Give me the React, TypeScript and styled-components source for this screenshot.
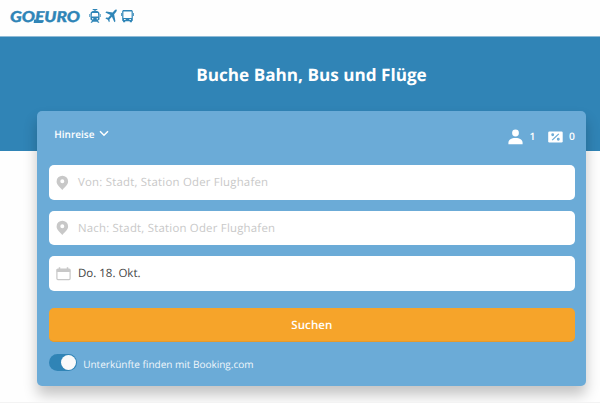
import React, { useState } from 'react';
import styled, { createGlobalStyle } from 'styled-components';

const GlobalStyle = createGlobalStyle`
  * { box-sizing: border-box; }
  body { margin: 0; background: #fefefe; overflow: hidden; font-family: 'Open Sans', sans-serif; text-rendering: geometricPrecision; }
  button { font-family: inherit; border: 0; padding: 0; background: none; text-rendering: inherit; }
`;

const Page = styled.div`
  width: 600px;
  height: 403px;
  overflow: hidden;
  border-bottom: 1px solid #f3f3f3;
`;

const Header = styled.header`
  display: flex;
  align-items: flex-start;
  height: 37px;
  padding: 8px 0 0 9px;
  border-bottom: 1px solid #8fbbd7;
`;

const Vehicles = styled.div`
  display: flex;
  gap: 4px;
  margin-left: 7px;
  color: #2f85b7;
`;

const Hero = styled.section`
  height: 114px;
  padding-top: 27px;
  background: #3084b6;
`;

const Title = styled.h1`
  margin: 0 0 0 23px;
  color: #fff;
  font-size: 17.15px;
  line-height: 24px;
  font-weight: 700;
  text-align: center;
`;

const Card = styled.form`
  width: 549px;
  height: 275px;
  margin: -40px 0 0 37.3px;
  padding: 14px 11.3px 0 11.4px;
  border-radius: 5px;
  background: #6babd7;
  box-shadow: 0 9px 14px rgba(0, 0, 0, 0.23);
  position: relative;
`;

const Options = styled.div`
  display: flex;
  justify-content: space-between;
  height: 40px;
  color: #fff;
`;

const TripType = styled.button`
  display: flex;
  align-items: center;
  gap: 5px;
  height: 17px;
  margin-left: 5.6px;
  color: #fff;
  font-size: 10px;
  font-weight: 600;
`;

const Counters = styled.div`
  display: flex;
  align-items: center;
  height: 23px;
  font-size: 10.3px;
  font-weight: 600;
`;

const Count = styled.span<{ $gap: number }>`
  width: 6px;
  margin: 0 ${(p) => p.$gap}px 0 6.5px;
`;

const Field = styled.label<{ $filled?: boolean }>`
  display: flex;
  align-items: center;
  height: 34.5px;
  margin-bottom: 11px;
  padding-top: ${(p) => (p.$filled ? 1 : 0.8)}px;
  padding-left: 7.8px;
  border-radius: 5px;
  background: #fff;
  color: ${(p) => (p.$filled ? '#444' : '#c9c9c9')};
  font-size: ${(p) => (p.$filled ? 11.5 : 11.4)}px;
  letter-spacing: ${(p) => (p.$filled ? '0' : '0.22px')};
  svg { flex: none; margin-right: ${(p) => (p.$filled ? 6.5 : 8.5)}px; color: #c8c8c8; }
`;

const SearchButton = styled.button`
  display: block;
  width: 100%;
  height: 34px;
  margin-top: 17px;
  padding-top: 2px;
  border-radius: 5px;
  border-bottom: 1px solid #e69a2b;
  background: #f6a42a;
  color: #fff;
  font-size: 11.5px;
  font-weight: 600;
  letter-spacing: 0.1px;
`;

const Lodging = styled.div`
  display: flex;
  align-items: center;
  height: 18px;
  margin-top: 12px;
  color: #f1f7fb;
  font-size: 10px;
`;

const LodgingText = styled.span`
  padding-top: 2px;
`;

const Switch = styled.button<{ $on: boolean }>`
  display: flex;
  justify-content: ${(p) => (p.$on ? 'flex-end' : 'flex-start')};
  width: 28px;
  height: 17px;
  margin-right: 6.5px;
  padding: 1px;
  border-radius: 9px;
  background: #3084b6;
`;

const Knob = styled.span`
  width: 15px;
  height: 15px;
  border-radius: 50%;
  background: #fafafa;
`;

const Logo = () => (
  <svg width="73" height="17" viewBox="0 0 73 17">
    <text x="1" y="13.500" textLength="70" lengthAdjust="spacingAndGlyphs" fill="#2f85b7" stroke="#2f85b7"
      strokeWidth=".35" fontFamily="Lato" fontWeight="900" fontStyle="italic" fontSize="15">GOEURO</text>
    <path d="M25.200 11.500h2l-.3 2h7l-.3 1.400h-9z" fill="#2f85b7" />
  </svg>
);

const Train = () => (
  <svg width="12" height="16" viewBox="0 0 13 16" preserveAspectRatio="none" fill="currentColor">
    <path fillRule="evenodd" d="M4 1h5v1H7.200v.8c2.700.1 4.200 1.200 4.200 3.200v4.800c0 1-.7 1.700-1.800 1.700l1.700 2.300H9.700l-.8-1H4.100l-.8 1H1.700l1.700-2.300c-1.100 0-1.800-.7-1.800-1.700V6c0-2 1.500-3.100 4.200-3.200V2H4zM3.300 5 2.900 8.600h7.200L9.700 5zM4 9.900a.8.8 0 1 0 0 1.600.8.8 0 0 0 0-1.600m5 0a.8.8 0 1 0 0 1.600.8.8 0 0 0 0-1.600" />
    <path d="M.4 6h.8v3H.4zm11.400 0h.8v3h-.8z" />
  </svg>
);

const Plane = () => (
  <svg width="12" height="16" viewBox="0 0 13 16" preserveAspectRatio="none" fill="currentColor">
    <path d="M12.600 1.800c.5.6-.1 1.700-.8 2.400L9.900 6.300l1.400 7-1.100.9-2.700-5.400-2.600 2.500.2 2.200-.8.7-1.200-2.500L.5 10.400l.8-.8 2.200.2L6 7.100.4 4.600l1.100-1.100 6.800 1.100 1.900-2c.8-.8 1.800-1.400 2.400-.8" />
  </svg>
);

const Bus = () => (
  <svg width="13" height="16" viewBox="0 0 13 16" fill="currentColor">
    <path fillRule="evenodd" d="M2.800 2h7.400c1 0 1.600.6 1.600 1.500v8.800c0 .5-.4.9-.9.9v1H8.800v-1H4.200v1H2.100v-1c-.5 0-.9-.4-.9-.9V3.500C1.200 2.600 1.800 2 2.800 2M2.400 3.500v6.600h8.200V3.500zM3.100 11.100v.9h1.500v-.9zm5.300 0v.9h1.500v-.9z" />
    <path d="M.1 5h.8v3H.1zm12 0h.8v3h-.8z" />
  </svg>
);

const Pin = () => (
  <svg width="13" height="16" viewBox="0 0 13 16" fill="currentColor">
    <path fillRule="evenodd" d="M6.300.7a5.700 5.700 0 0 0-5.700 5.700c0 3.400 2.900 4.800 5.700 8.700 2.800-3.900 5.800-5.300 5.800-8.700A5.700 5.700 0 0 0 6.300.7m0 3.600a2 2 0 1 1 0 4 2 2 0 0 1 0-4" />
  </svg>
);

const Calendar = () => (
  <svg width="15" height="14" viewBox="0 0 15 14">
    <path d="M3.500.3v2m8-2v2" stroke="currentColor" strokeWidth="1.500" />
    <rect x=".9" y="2.200" width="13.200" height="10.400" rx="1" fill="none" stroke="currentColor" strokeWidth="1.200" />
    <path d="M.8 2h13.400v3H.8z" fill="currentColor" />
  </svg>
);

const Chevron = () => (
  <svg width="10" height="7" viewBox="0 0 10 7">
    <path d="m1 1.200 4 4 4-4" fill="none" stroke="currentColor" strokeWidth="1.500" />
  </svg>
);

const Person = () => (
  <svg width="15" height="16" viewBox="0 0 15 16" fill="currentColor">
    <circle cx="7.500" cy="4" r="3.400" />
    <path d="M.4 15.300v-1.600c0-3 2.800-4.800 7.100-4.800s7.100 1.800 7.100 4.800v1.600z" />
  </svg>
);

const Discount = () => (
  <svg width="15" height="12" viewBox="0 0 15 12">
    <rect x=".2" y=".5" width="14.500" height="11" rx="1.200" fill="currentColor" />
    <g fill="none" stroke="#6babd7" strokeWidth="1.300">
      <path d="m4.200 9.100 6.600-6.200" />
      <circle cx="4.700" cy="3.700" r=".8" />
      <circle cx="10.300" cy="8.300" r=".8" />
    </g>
  </svg>
);

export default function App() {
  const [lodging, setLodging] = useState(true);
  return (
    <Page>
      <GlobalStyle />
      <Header>
        <Logo />
        <Vehicles><Train /><Plane /><Bus /></Vehicles>
      </Header>
      <Hero><Title>Buche Bahn, Bus und Flüge</Title></Hero>
      <Card onSubmit={(e) => e.preventDefault()}>
        <Options>
          <TripType type="button">Hinreise <Chevron /></TripType>
          <Counters>
            <Person /><Count $gap={12}>1</Count>
            <Discount /><Count $gap={0}>0</Count>
          </Counters>
        </Options>
        <Field><Pin />Von: Stadt, Station Oder Flughafen</Field>
        <Field><Pin />Nach: Stadt, Station Oder Flughafen</Field>
        <Field $filled><Calendar />Do. 18. Okt.</Field>
        <SearchButton>Suchen</SearchButton>
        <Lodging>
          <Switch type="button" $on={lodging} onClick={() => setLodging(!lodging)}><Knob /></Switch>
          <LodgingText>Unterkünfte finden mit Booking.com</LodgingText>
        </Lodging>
      </Card>
    </Page>
  );
}
